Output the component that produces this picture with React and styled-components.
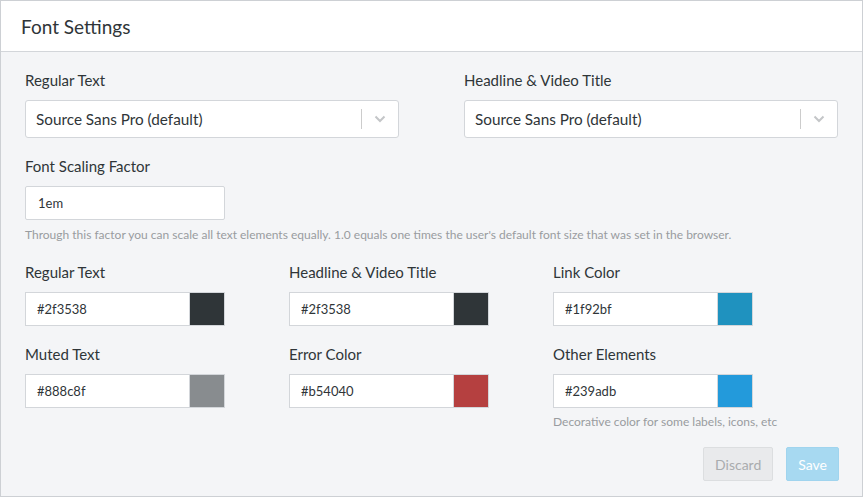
import React from "react";
import styled, { createGlobalStyle } from "styled-components";

const GlobalStyle = createGlobalStyle`
  body {
    margin: 0;
    background: #ffffff;
    font-family: Lato, "Open Sans", "Liberation Sans", sans-serif;
    color: #2f3538;
  }
`;

const Panel = styled.div`
  width: 863px;
  height: 497px;
  box-sizing: border-box;
  border: 1px solid #cdd0d4;
  background: #f4f5f7;
  display: flex;
  flex-direction: column;
`;

const Header = styled.div`
  height: 50px;
  flex-shrink: 0;
  background: #ffffff;
  border-bottom: 1px solid #d3d6da;
  padding: 0 20px;
  display: flex;
  align-items: center;
  font-size: 19px;
  color: #2f3538;
`;

const Body = styled.div`
  padding: 18px 23px 0 24px;
  display: flex;
  flex-direction: column;
`;

const TwoCols = styled.div`
  display: grid;
  grid-template-columns: 374px 374px;
  column-gap: 65px;
`;

const ThreeCols = styled.div`
  display: grid;
  grid-template-columns: 200px 200px 200px;
  column-gap: 64px;
  row-gap: 18px;
  margin-top: 19px;
`;

const Field = styled.div`
  display: flex;
  flex-direction: column;
  margin-top: ${(p) => p.$top || 0}px;
`;

const Label = styled.div`
  font-size: 15px;
  line-height: 20px;
  height: 20px;
  margin-bottom: 10px;
  color: #2f3538;
`;

const Select = styled.div`
  height: 38px;
  box-sizing: border-box;
  border: 1px solid #d3d6da;
  border-radius: 3px;
  background: #fff;
  display: flex;
  align-items: center;
  font-size: 15.3px;
`;

const SelectValue = styled.div`
  flex: 1;
  padding-left: 10px;
`;

const Divider = styled.span`
  width: 1px;
  height: 20px;
  background: #cccccc;
`;

const Chevron = styled.div`
  width: 36px;
  display: flex;
  justify-content: center;
  align-items: center;
`;

const TextInput = styled.div`
  width: 200px;
  height: 34px;
  box-sizing: border-box;
  border: 1px solid #d3d6da;
  border-radius: 2px;
  background: #fff;
  display: flex;
  align-items: center;
  padding-left: 12px;
  font-size: 13px;
`;

const Help = styled.div`
  font-size: 12px;
  line-height: 16px;
  white-space: nowrap;
  color: #999c9f;
  margin-top: ${(p) => p.$top || 7}px;
`;

const ColorInput = styled.div`
  width: 200px;
  height: 34px;
  box-sizing: border-box;
  border: 1px solid #d3d6da;
  background: #fff;
  display: flex;
  align-items: stretch;
  font-size: 13px;
`;

const ColorValue = styled.div`
  flex: 1;
  display: flex;
  align-items: center;
  padding-left: 11px;
`;

const Swatch = styled.div`
  width: 34px;
  border-left: 1px solid #d3d6da;
  background: ${(p) => p.$color};
`;

const Actions = styled.div`
  display: flex;
  justify-content: flex-end;
  gap: 13px;
  margin-top: 17px;
`;

const Button = styled.button`
  height: 34px;
  box-sizing: border-box;
  padding: 0 11px;
  border-radius: 2px;
  font-family: inherit;
  font-size: 14px;
  border: 1px solid ${(p) => (p.$primary ? "#a0d4ee" : "#dcdee0")};
  background: ${(p) => (p.$primary ? "#a7d9f1" : "#e9eaec")};
  color: ${(p) => (p.$primary ? "#ffffff" : "#a9acae")};
`;

const fonts = [
  { label: "Regular Text", value: "Source Sans Pro (default)" },
  { label: "Headline & Video Title", value: "Source Sans Pro (default)" },
];

const colors = [
  { label: "Regular Text", value: "#2f3538" },
  { label: "Headline & Video Title", value: "#2f3538" },
  { label: "Link Color", value: "#1f92bf" },
  { label: "Muted Text", value: "#888c8f" },
  { label: "Error Color", value: "#b54040" },
  {
    label: "Other Elements",
    value: "#239adb",
    help: "Decorative color for some labels, icons, etc",
  },
];

const ChevronIcon = () => (
  <svg width="12" height="8" viewBox="0 0 12 8">
    <polyline
      points="1.5,1.5 6,6 10.5,1.5"
      fill="none"
      stroke="#c4c6c8"
      strokeWidth="2"
    />
  </svg>
);

export default function App() {
  return (
    <>
      <GlobalStyle />
      <Panel>
        <Header>Font Settings</Header>
        <Body>
          <TwoCols>
            {fonts.map((f) => (
              <Field key={f.label}>
                <Label>{f.label}</Label>
                <Select>
                  <SelectValue>{f.value}</SelectValue>
                  <Divider />
                  <Chevron>
                    <ChevronIcon />
                  </Chevron>
                </Select>
              </Field>
            ))}
          </TwoCols>
          <Field $top={18}>
            <Label>Font Scaling Factor</Label>
            <TextInput>1em</TextInput>
            <Help>
              Through this factor you can scale all text elements equally. 1.0
              equals one times the user's default font size that was set in the
              browser.
            </Help>
          </Field>
          <ThreeCols>
            {colors.map((c) => (
              <Field key={c.label + c.value}>
                <Label>{c.label}</Label>
                <ColorInput>
                  <ColorValue>{c.value}</ColorValue>
                  <Swatch $color={c.value} />
                </ColorInput>
                {c.help && <Help $top={6}>{c.help}</Help>}
              </Field>
            ))}
          </ThreeCols>
          <Actions>
            <Button>Discard</Button>
            <Button $primary>Save</Button>
          </Actions>
        </Body>
      </Panel>
    </>
  );
}
